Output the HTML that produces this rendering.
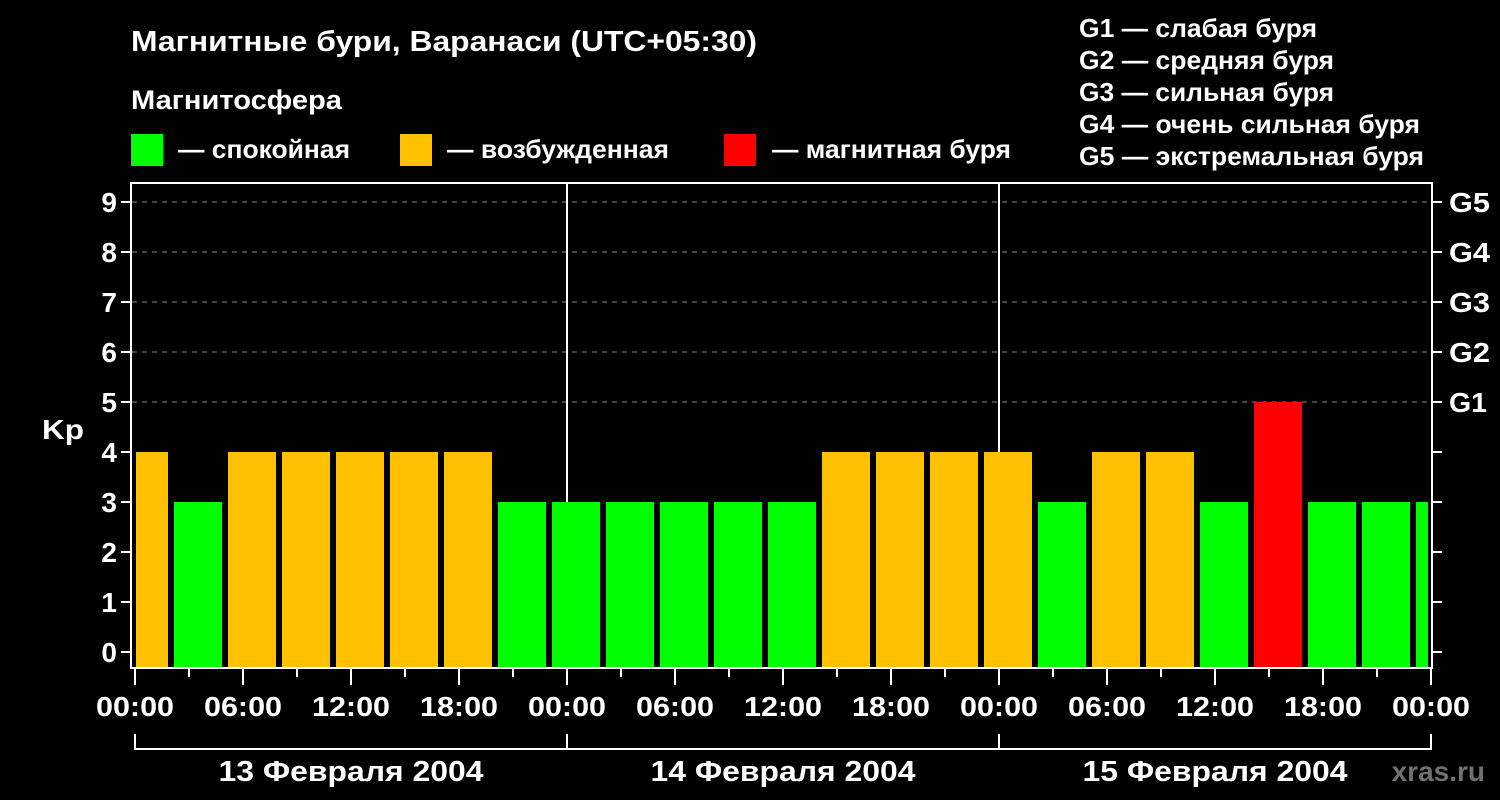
<!DOCTYPE html>
<html><head><meta charset="utf-8"><style>
html,body{margin:0;padding:0;background:#000;}
svg{display:block}
text{font-family:"Liberation Sans",Arial,sans-serif;font-weight:bold;fill:#fff}
</style></head><body>
<svg width="1500" height="800" viewBox="0 0 1500 800" xmlns="http://www.w3.org/2000/svg">
<rect width="1500" height="800" fill="#000"/>
<text x="131" y="51" font-size="29" textLength="626" lengthAdjust="spacingAndGlyphs">Магнитные бури, Варанаси (UTC+05:30)</text>
<text x="131" y="109" font-size="27" textLength="211" lengthAdjust="spacingAndGlyphs">Магнитосфера</text>
<rect x="131" y="134" width="32" height="32" fill="#00ff00"/>
<text x="178" y="158" font-size="26" textLength="172" lengthAdjust="spacingAndGlyphs">— спокойная</text>
<rect x="400" y="134" width="32" height="32" fill="#ffc000"/>
<text x="447" y="158" font-size="26" textLength="222" lengthAdjust="spacingAndGlyphs">— возбужденная</text>
<rect x="724" y="134" width="32" height="32" fill="#ff0000"/>
<text x="772" y="158" font-size="26" textLength="239" lengthAdjust="spacingAndGlyphs">— магнитная буря</text>
<g font-size="26">
<text x="1079" y="37" textLength="238" lengthAdjust="spacingAndGlyphs">G1 — слабая буря</text>
<text x="1079" y="69" textLength="255" lengthAdjust="spacingAndGlyphs">G2 — средняя буря</text>
<text x="1079" y="101" textLength="255" lengthAdjust="spacingAndGlyphs">G3 — сильная буря</text>
<text x="1079" y="133" textLength="341" lengthAdjust="spacingAndGlyphs">G4 — очень сильная буря</text>
<text x="1079" y="165" textLength="345" lengthAdjust="spacingAndGlyphs">G5 — экстремальная буря</text>
</g>
<g stroke="#888" stroke-width="1" stroke-dasharray="5,5">
<line x1="132" y1="202" x2="1431" y2="202"/>
<line x1="132" y1="252" x2="1431" y2="252"/>
<line x1="132" y1="302" x2="1431" y2="302"/>
<line x1="132" y1="352" x2="1431" y2="352"/>
<line x1="132" y1="402" x2="1431" y2="402"/>
</g>
<g stroke="#fff" stroke-width="2">
<line x1="567" y1="183" x2="567" y2="668"/>
<line x1="999" y1="183" x2="999" y2="668"/>
</g>
<g>
<rect x="136" y="452" width="32" height="216" fill="#ffc000"/>
<rect x="174" y="502" width="48" height="166" fill="#00ff00"/>
<rect x="228" y="452" width="48" height="216" fill="#ffc000"/>
<rect x="282" y="452" width="48" height="216" fill="#ffc000"/>
<rect x="336" y="452" width="48" height="216" fill="#ffc000"/>
<rect x="390" y="452" width="48" height="216" fill="#ffc000"/>
<rect x="444" y="452" width="48" height="216" fill="#ffc000"/>
<rect x="498" y="502" width="48" height="166" fill="#00ff00"/>
<rect x="552" y="502" width="48" height="166" fill="#00ff00"/>
<rect x="606" y="502" width="48" height="166" fill="#00ff00"/>
<rect x="660" y="502" width="48" height="166" fill="#00ff00"/>
<rect x="714" y="502" width="48" height="166" fill="#00ff00"/>
<rect x="768" y="502" width="48" height="166" fill="#00ff00"/>
<rect x="822" y="452" width="48" height="216" fill="#ffc000"/>
<rect x="876" y="452" width="48" height="216" fill="#ffc000"/>
<rect x="930" y="452" width="48" height="216" fill="#ffc000"/>
<rect x="984" y="452" width="48" height="216" fill="#ffc000"/>
<rect x="1038" y="502" width="48" height="166" fill="#00ff00"/>
<rect x="1092" y="452" width="48" height="216" fill="#ffc000"/>
<rect x="1146" y="452" width="48" height="216" fill="#ffc000"/>
<rect x="1200" y="502" width="48" height="166" fill="#00ff00"/>
<rect x="1254" y="402" width="48" height="266" fill="#ff0000"/>
<rect x="1308" y="502" width="48" height="166" fill="#00ff00"/>
<rect x="1362" y="502" width="48" height="166" fill="#00ff00"/>
<rect x="1416" y="502" width="12" height="166" fill="#00ff00"/>
</g>
<rect x="131" y="183" width="1301" height="485" fill="none" stroke="#fff" stroke-width="2"/>
<g stroke="#fff" stroke-width="2">
<line x1="121" y1="202" x2="131" y2="202"/><line x1="121" y1="252" x2="131" y2="252"/>
<line x1="121" y1="302" x2="131" y2="302"/><line x1="121" y1="352" x2="131" y2="352"/>
<line x1="121" y1="402" x2="131" y2="402"/><line x1="121" y1="452" x2="131" y2="452"/>
<line x1="121" y1="502" x2="131" y2="502"/><line x1="121" y1="552" x2="131" y2="552"/>
<line x1="121" y1="602" x2="131" y2="602"/><line x1="121" y1="652" x2="131" y2="652"/>
<line x1="1432" y1="202" x2="1442" y2="202"/><line x1="1432" y1="252" x2="1442" y2="252"/>
<line x1="1432" y1="302" x2="1442" y2="302"/><line x1="1432" y1="352" x2="1442" y2="352"/>
<line x1="1432" y1="402" x2="1442" y2="402"/><line x1="1432" y1="452" x2="1442" y2="452"/>
<line x1="1432" y1="502" x2="1442" y2="502"/><line x1="1432" y1="552" x2="1442" y2="552"/>
<line x1="1432" y1="602" x2="1442" y2="602"/><line x1="1432" y1="652" x2="1442" y2="652"/>
<line x1="135" y1="668" x2="135" y2="685"/><line x1="189" y1="668" x2="189" y2="677"/>
<line x1="243" y1="668" x2="243" y2="685"/><line x1="297" y1="668" x2="297" y2="677"/>
<line x1="351" y1="668" x2="351" y2="685"/><line x1="405" y1="668" x2="405" y2="677"/>
<line x1="459" y1="668" x2="459" y2="685"/><line x1="513" y1="668" x2="513" y2="677"/>
<line x1="567" y1="668" x2="567" y2="685"/><line x1="621" y1="668" x2="621" y2="677"/>
<line x1="675" y1="668" x2="675" y2="685"/><line x1="729" y1="668" x2="729" y2="677"/>
<line x1="783" y1="668" x2="783" y2="685"/><line x1="837" y1="668" x2="837" y2="677"/>
<line x1="891" y1="668" x2="891" y2="685"/><line x1="945" y1="668" x2="945" y2="677"/>
<line x1="999" y1="668" x2="999" y2="685"/><line x1="1053" y1="668" x2="1053" y2="677"/>
<line x1="1107" y1="668" x2="1107" y2="685"/><line x1="1161" y1="668" x2="1161" y2="677"/>
<line x1="1215" y1="668" x2="1215" y2="685"/><line x1="1269" y1="668" x2="1269" y2="677"/>
<line x1="1323" y1="668" x2="1323" y2="685"/><line x1="1377" y1="668" x2="1377" y2="677"/>
<line x1="1431" y1="668" x2="1431" y2="685"/>
<polyline fill="none" points="135,734 135,749 1431,749 1431,734"/>
<line x1="567" y1="734" x2="567" y2="749"/><line x1="999" y1="734" x2="999" y2="749"/>
</g>
<g font-size="28" text-anchor="end">
<text x="117" y="212">9</text><text x="117" y="262">8</text><text x="117" y="312">7</text>
<text x="117" y="362">6</text><text x="117" y="412">5</text><text x="117" y="462">4</text>
<text x="117" y="512">3</text><text x="117" y="562">2</text><text x="117" y="612">1</text>
<text x="117" y="662">0</text>
</g>
<text x="42" y="439" font-size="28" textLength="42" lengthAdjust="spacingAndGlyphs">Kp</text>
<g font-size="28">
<text x="1449" y="212" textLength="41" lengthAdjust="spacingAndGlyphs">G5</text>
<text x="1449" y="262" textLength="41" lengthAdjust="spacingAndGlyphs">G4</text>
<text x="1449" y="312" textLength="41" lengthAdjust="spacingAndGlyphs">G3</text>
<text x="1449" y="362" textLength="41" lengthAdjust="spacingAndGlyphs">G2</text>
<text x="1449" y="412" textLength="38" lengthAdjust="spacingAndGlyphs">G1</text>
</g>
<g font-size="28" text-anchor="middle">
<text x="135" y="716" textLength="78" lengthAdjust="spacingAndGlyphs">00:00</text><text x="243" y="716" textLength="78" lengthAdjust="spacingAndGlyphs">06:00</text><text x="351" y="716" textLength="78" lengthAdjust="spacingAndGlyphs">12:00</text>
<text x="459" y="716" textLength="78" lengthAdjust="spacingAndGlyphs">18:00</text><text x="567" y="716" textLength="78" lengthAdjust="spacingAndGlyphs">00:00</text><text x="675" y="716" textLength="78" lengthAdjust="spacingAndGlyphs">06:00</text>
<text x="783" y="716" textLength="78" lengthAdjust="spacingAndGlyphs">12:00</text><text x="891" y="716" textLength="78" lengthAdjust="spacingAndGlyphs">18:00</text><text x="999" y="716" textLength="78" lengthAdjust="spacingAndGlyphs">00:00</text>
<text x="1107" y="716" textLength="78" lengthAdjust="spacingAndGlyphs">06:00</text><text x="1215" y="716" textLength="78" lengthAdjust="spacingAndGlyphs">12:00</text><text x="1323" y="716" textLength="78" lengthAdjust="spacingAndGlyphs">18:00</text>
<text x="1431" y="716" textLength="78" lengthAdjust="spacingAndGlyphs">00:00</text>
<text x="351" y="781" font-size="29" textLength="265" lengthAdjust="spacingAndGlyphs">13 Февраля 2004</text>
<text x="783" y="781" font-size="29" textLength="265" lengthAdjust="spacingAndGlyphs">14 Февраля 2004</text>
<text x="1215" y="781" font-size="29" textLength="265" lengthAdjust="spacingAndGlyphs">15 Февраля 2004</text>
</g>
<text x="1485" y="781" font-size="28" text-anchor="end" style="fill:#707070">xras.ru</text>
</svg>
</body></html>
